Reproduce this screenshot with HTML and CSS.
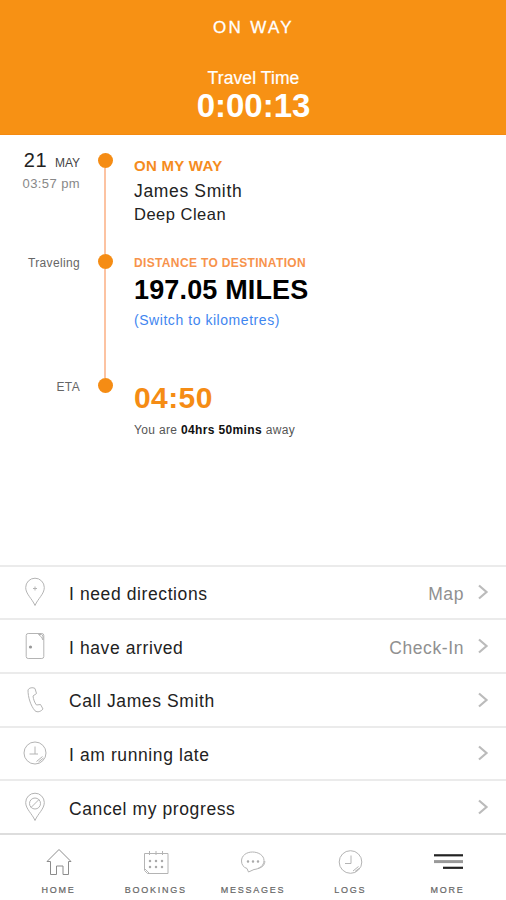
FILE: index.html
```html
<!DOCTYPE html>
<html lang="en">
<head>
<meta charset="utf-8">
<title>On Way</title>
<link rel="stylesheet" href="styles.css">
</head>
<body>
<header class="header">
  <h1 class="title">ON WAY</h1>
  <div class="caption">Travel Time</div>
  <div class="timer">0:00:13</div>
</header>

<main class="timeline">
  <section class="step step-way">
    <div class="when">
      <div class="date"><span class="day">21</span> MAY</div>
      <div class="time">03:57 pm</div>
    </div>
    <div class="marker"><i class="dot"></i><i class="line"></i></div>
    <div class="detail">
      <div class="status">ON MY WAY</div>
      <div class="name">James Smith</div>
      <div class="job">Deep Clean</div>
    </div>
  </section>
  <section class="step step-travel">
    <div class="when label">Traveling</div>
    <div class="marker"><i class="dot"></i><i class="line"></i></div>
    <div class="detail">
      <div class="distance-label">DISTANCE TO DESTINATION</div>
      <div class="distance">197.05 MILES</div>
      <a class="switch">(Switch to kilometres)</a>
    </div>
  </section>
  <section class="step step-eta">
    <div class="when label">ETA</div>
    <div class="marker"><i class="dot"></i></div>
    <div class="detail">
      <div class="eta">04:50</div>
      <div class="away">You are <b>04hrs 50mins</b> away</div>
    </div>
  </section>
</main>

<ul class="actions">
  <li class="action">
    <svg class="icon" viewBox="0 0 24 30"><path d="M12 28.500C9 21.500 2.700 17 2.700 10.500A9.300 9.300 0 0 1 21.300 10.500C21.300 17 15 21.500 12 28.500Z"/><path d="M12 9.500v4M10 11.500h4"/></svg>
    <span class="text">I need directions</span><span class="hint">Map</span>
    <svg class="chevron" viewBox="0 0 12 16"><path d="M2 1.500 9.500 8 2 14.500"/></svg>
  </li>
  <li class="action">
    <svg class="icon" viewBox="0 0 24 30"><rect x="3.200" y="2.500" width="17.600" height="25" rx="2"/><path d="M15.500 3.500h3l1.500 1.500v4L18.500 6Z"/><circle class="knob" cx="7.500" cy="16" r="1.600"/></svg>
    <span class="text">I have arrived</span><span class="hint">Check-In</span>
    <svg class="chevron" viewBox="0 0 12 16"><path d="M2 1.500 9.500 8 2 14.500"/></svg>
  </li>
  <li class="action">
    <svg class="icon" viewBox="0 0 24 30"><path d="M5 5C6 2.800 9.500 2 12 3.500L13.500 8.500 10 11C10.500 14.500 11.500 17.500 13.500 20L17.500 19.500 20 24C18 26.500 14.500 27.800 12 25.800C7.500 20.500 5 12 5 5Z"/></svg>
    <span class="text">Call James Smith</span>
    <svg class="chevron" viewBox="0 0 12 16"><path d="M2 1.500 9.500 8 2 14.500"/></svg>
  </li>
  <li class="action">
    <svg class="icon" viewBox="0 0 24 30"><circle cx="12" cy="15" r="11"/><path d="M12 8.500v7.500H6.500M12 16h3M19.500 18.500l-6 5M20.500 20l-5 4"/></svg>
    <span class="text">I am running late</span>
    <svg class="chevron" viewBox="0 0 12 16"><path d="M2 1.500 9.500 8 2 14.500"/></svg>
  </li>
  <li class="action">
    <svg class="icon" viewBox="0 0 24 30"><path d="M12 28.500C9 21.500 2.700 17 2.700 10.500A9.300 9.300 0 0 1 21.300 10.500C21.300 17 15 21.500 12 28.500Z"/><circle cx="12" cy="11.500" r="5.500"/><path d="M8 15.500l8-8"/></svg>
    <span class="text">Cancel my progress</span>
    <svg class="chevron" viewBox="0 0 12 16"><path d="M2 1.500 9.500 8 2 14.500"/></svg>
  </li>
</ul>

<nav class="tabs">
  <a class="tab"><svg class="tab-icon home" viewBox="0 0 30 30"><path d="M6.500 14.500H3L15 2.500 27 14.500H24.500V27.500H19V19H12.500V27.500H6.500Z"/></svg>HOME</a>
  <a class="tab"><svg class="tab-icon" viewBox="0 0 30 30"><path d="M3.500 6.500H27v20H6.500l-3-3ZM3.500 21.500l5 5M8.500 4v4M15 4v4M21.500 4v4"/><path class="dots" d="M9 14h0M15 14h0M21 14h0M9 20h0M15 20h0M21 20h0"/></svg>BOOKINGS</a>
  <a class="tab"><svg class="tab-icon" viewBox="0 0 30 30"><path d="M10.500 25 9 21.500C5.500 20.500 3.500 17.500 3.500 14 3.500 8.500 8.500 5 14.500 5S26 8.500 26 13.500 21.500 22 16 22.500ZM20 21.500C24 20.500 27 18 26.800 14"/><path class="dots" d="M10 14.500h0M15 14.500h0M20 14.500h0"/></svg>MESSAGES</a>
  <a class="tab"><svg class="tab-icon" viewBox="0 0 30 30"><circle cx="15.500" cy="15" r="11.300"/><path d="M16 8.500v8H10M23.500 19.500l-5.500 4.500M24 21.500l-4 3"/></svg>LOGS</a>
  <a class="tab"><svg class="tab-icon more" viewBox="0 0 30 30"><path d="M2 8.300h29"/><path class="mid" d="M2 14.600h29"/><path d="M11 20.800h20"/></svg>MORE</a>
</nav>
</body>
</html>
```
FILE: styles.css
```css
* { box-sizing: border-box; }

body {
  margin: 0;
  height: 900px;
  display: flex;
  flex-direction: column;
  overflow: hidden;
  background: #fff;
  color: #222;
  font-family: "Liberation Sans", Arial, sans-serif;
}

.header {
  height: 134.500px;
  padding-top: 18px;
  background: #f79114;
  color: #fff;
  text-align: center;
  border-bottom: 1px solid #f58a10;
}
.title {
  margin: 0 0 31px;
  font-size: 17px;
  font-weight: 400;
  line-height: 20px;
  letter-spacing: 2.300px;
  padding-left: 1px;
  -webkit-text-stroke: .3px #fff;
}
.caption { font-size: 17.500px; line-height: 19px; letter-spacing: .1px; padding-left: 1px; -webkit-text-stroke: .2px #fff; }
.timer { margin-top: 1px; font-size: 33px; font-weight: 700; line-height: 33px; padding-left: 1px; }

.timeline { padding-top: 18.500px; }
.step { display: grid; grid-template-columns: 80px 51px 1fr; column-gap: 0; }
.step-way { height: 100.500px; }
.step-travel { height: 124.500px; }
.when { text-align: right; color: #666; }
.date { margin-top: -3px; font-size: 12px; line-height: 20px; color: #444; }
.day { margin-right: 4px; font-size: 20px; letter-spacing: .8px; color: #222; }
.time { margin-top: 1px; font-size: 13px; line-height: 20px; letter-spacing: .4px; color: #888; }
.label { padding-top: 1px; font-size: 12px; line-height: 16px; letter-spacing: .35px; }

.marker { display: flex; flex-direction: column; align-items: center; }
.dot { flex: none; width: 15px; height: 15px; border-radius: 50%; background: #f58c14; }
.line { flex: 1; width: 2px; margin-left: -1px; background: #fcc3a2; }

.detail { padding-left: 3px; }
.status { padding-top: 3px; font-size: 15px; font-weight: 700; line-height: 20px; letter-spacing: .3px; color: #f58c1e; }
.name { margin-top: 3px; font-size: 17.500px; line-height: 24px; letter-spacing: .65px; }
.job { font-size: 16.500px; line-height: 23px; letter-spacing: .5px; }
.distance-label { padding-top: 1px; font-size: 12px; font-weight: 700; line-height: 16px; letter-spacing: .35px; color: #f7934c; }
.distance { margin-top: 3px; font-size: 27px; font-weight: 700; line-height: 32px; letter-spacing: .15px; color: #000; }
.switch { display: block; margin-top: 4px; font-size: 14px; line-height: 20px; letter-spacing: .55px; color: #3f86f0; }
.eta { padding-top: 4px; font-size: 30px; font-weight: 700; line-height: 32px; letter-spacing: .4px; color: #f58c14; }
.away { margin-top: 8px; font-size: 12px; line-height: 16px; letter-spacing: .35px; color: #555; }
.away b { color: #111; }

.actions { list-style: none; margin: auto 0 0; padding: 0; }
.action {
  display: flex;
  align-items: center;
  height: 53.700px;
  padding: 0 17px 0 23px;
  border-top: 2px solid #ebebeb;
}
.icon { width: 24px; height: 30px; margin-right: 22px; fill: none; stroke: #b4b4b4; stroke-width: 1; }
.knob { fill: #999; stroke: none; }
.text { flex: 1; padding-top: 3px; font-size: 17.500px; line-height: 20px; letter-spacing: .6px; }
.hint { margin-right: 13px; padding-top: 3px; font-size: 17.500px; line-height: 20px; letter-spacing: .6px; color: #909090; }
.chevron { width: 12px; height: 16px; fill: none; stroke: #bbb; stroke-width: 2.200; }

.tabs {
  display: flex;
  height: 67px;
  padding: 0 10px;
  border-top: 2px solid #ddd;
}
.tab {
  flex: 1 1 0;
  display: flex;
  flex-direction: column;
  align-items: center;
  padding-top: 12px;
  font-size: 9px;
  line-height: 12px;
  letter-spacing: 1.750px;
  color: #666;
  -webkit-text-stroke: .2px #666;
}
.tab-icon { width: 30px; height: 30px; margin-bottom: 7px; overflow: visible; fill: none; stroke: #b4b4b4; stroke-width: 1; }
.home { stroke: #8c8c8c; }
.dots { stroke: #aaa; stroke-width: 2.500; stroke-linecap: round; }
.more { stroke: #222; stroke-width: 2.200; }
.mid { stroke: #999; stroke-width: 3; }
```
